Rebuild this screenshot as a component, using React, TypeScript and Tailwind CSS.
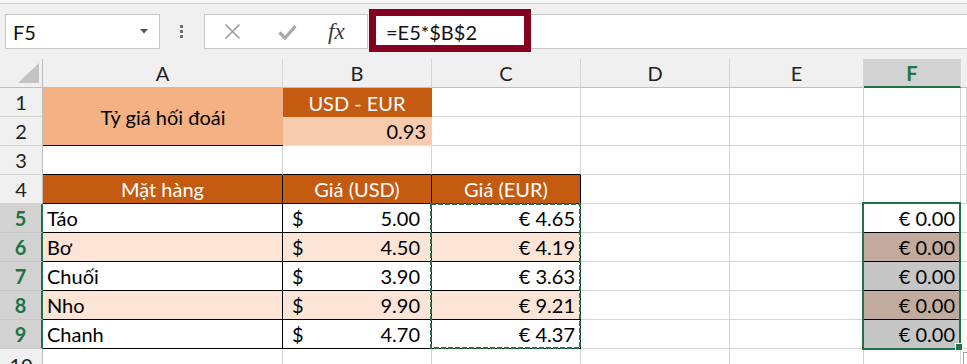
import React from "react";

const rows = [
  { n: 5, name: "Táo", usd: "5.00", eur: "€ 4.65", alt: false },
  { n: 6, name: "Bơ", usd: "4.50", eur: "€ 4.19", alt: true },
  { n: 7, name: "Chuối", usd: "3.90", eur: "€ 3.63", alt: false },
  { n: 8, name: "Nho", usd: "9.90", eur: "€ 9.21", alt: true },
  { n: 9, name: "Chanh", usd: "4.70", eur: "€ 4.37", alt: false },
];

function RowHead({ n, sel }: { n: number; sel?: boolean }) {
  return sel ? (
    <div className="flex items-center justify-center bg-[#d2d2d2] border-b border-r-2 border-b-[#c6c6c6] border-r-[#217346] text-[#217346] font-bold">
      {n}
    </div>
  ) : (
    <div className="flex items-center justify-center bg-[#f0f0f0] border-b border-r border-b-[#d4d4d4] border-r-[#bfbfbf] text-[#222]">
      {n}
    </div>
  );
}

function Blank() {
  return <div className="border-r border-b border-[#d4d4d4] bg-white" />;
}

export default function App() {
  return (
    <div className="relative w-[967px] h-[364px] overflow-hidden bg-white text-[20px] leading-[24px] text-black font-['Lato',sans-serif]">
      {/* top strip */}
      <div className="h-[4px] bg-[#f7f7f7] border-b border-[#d0d0d0]" />
      {/* toolbar */}
      <div className="h-[55px] bg-[#f0f0f0] flex items-start pt-[10px]">
        <div className="ml-[5px] w-[155px] h-[35px] bg-white border border-[#c6c6c6] flex items-center justify-between pl-[7px] pr-[11px]">
          <span className="text-[#111]">F5</span>
          <svg width="8" height="5" viewBox="0 0 8 5">
            <path d="M0 0 L8 0 L4 4.5 Z" fill="#555" />
          </svg>
        </div>
        <div className="ml-[20px] mt-[11px] flex flex-col gap-[2px]">
          <div className="w-[3px] h-[3px] bg-[#6e6e6e]" />
          <div className="w-[3px] h-[3px] bg-[#6e6e6e]" />
          <div className="w-[3px] h-[3px] bg-[#6e6e6e]" />
        </div>
        <div className="ml-[21px] w-[164px] h-[35px] bg-white border border-[#c6c6c6] flex items-center">
          <svg className="ml-[19px]" width="17" height="17" viewBox="0 0 17 17">
            <path d="M1.5 1.5 L15.5 15.5 M15.5 1.5 L1.5 15.5" stroke="#9a9a9a" strokeWidth="1.6" />
          </svg>
          <svg className="ml-[37px]" width="19" height="16" viewBox="0 0 19 16">
            <path d="M1.5 8.5 L7 14 L17.5 2" stroke="#a8a8a8" strokeWidth="3.2" fill="none" strokeLinejoin="miter" />
          </svg>
          <span className="ml-[31px] text-[23px] italic text-[#3a3a3a] font-['Liberation_Serif',serif] leading-none">
            fx
          </span>
        </div>
        <div className="ml-[1px] flex-1 h-[35px] bg-white border-y border-[#c6c6c6] flex items-center pl-[17px]">
          <span className="text-[20px] text-[#111]">=E5*$B$2</span>
        </div>
      </div>

      {/* grid */}
      <div className="grid grid-cols-[43px_240px_149px_149px_149px_134px_97px_1fr] grid-rows-[29px_29px_29px_29px_29px_29px_29px_29px_29px_29px_29px]">
        {/* column headers */}
        <div className="relative bg-[#f0f0f0] border-r border-b border-r-[#bfbfbf] border-b-[#bfbfbf]">
          <svg className="absolute left-[18px] top-[4px]" width="22" height="21" viewBox="0 0 22 21">
            <path d="M21 0 L21 20 L0 20 Z" fill="#c4c4c4" />
          </svg>
        </div>
        <div className="flex items-center justify-center bg-[#f0f0f0] border-r border-b border-r-[#d4d4d4] border-b-[#bfbfbf] text-[#222]">A</div>
        <div className="flex items-center justify-center bg-[#f0f0f0] border-r border-b border-r-[#d4d4d4] border-b-[#bfbfbf] text-[#222]">B</div>
        <div className="flex items-center justify-center bg-[#f0f0f0] border-r border-b border-r-[#d4d4d4] border-b-[#bfbfbf] text-[#222]">C</div>
        <div className="flex items-center justify-center bg-[#f0f0f0] border-r border-b border-r-[#d4d4d4] border-b-[#bfbfbf] text-[#222]">D</div>
        <div className="flex items-center justify-center bg-[#f0f0f0] border-r border-b border-r-[#d4d4d4] border-b-[#bfbfbf] text-[#222]">E</div>
        <div className="flex items-center justify-center bg-[#d2d2d2] border-r border-b-2 border-r-[#d4d4d4] border-b-[#217346] text-[#217346] font-bold">F</div>
        <div className="bg-[#f0f0f0] border-b border-b-[#bfbfbf]" />

        {/* row 1 */}
        <RowHead n={1} />
        <div className="row-span-2 flex items-center justify-center bg-[#f4b183] border-b border-b-black">
          Tỷ giá hối đoái
        </div>
        <div className="flex items-center justify-center bg-[#c55a11] text-white border-r border-[#c55a11]">USD - EUR</div>
        <Blank />
        <Blank />
        <Blank />
        <Blank />
        <Blank />

        {/* row 2 */}
        <RowHead n={2} />
        <div className="flex items-center justify-end pr-[5px] bg-[#f8cbad] border-r border-b border-r-[#f8cbad] border-b-[#e6e6e6]">0.93</div>
        <Blank />
        <Blank />
        <Blank />
        <Blank />
        <Blank />

        {/* row 3 */}
        <RowHead n={3} />
        <div className="bg-white border-r border-b border-r-[#d4d4d4] border-b-black" />
        <div className="bg-white border-r border-b border-r-[#d4d4d4] border-b-black" />
        <div className="bg-white border-r border-b border-r-[#d4d4d4] border-b-black" />
        <Blank />
        <Blank />
        <Blank />
        <Blank />

        {/* row 4 */}
        <RowHead n={4} />
        <div className="flex items-center justify-center bg-[#c55a11] text-white border-r border-b border-black">Mặt hàng</div>
        <div className="flex items-center justify-center bg-[#c55a11] text-white border-r border-b border-black">Giá (USD)</div>
        <div className="flex items-center justify-center bg-[#c55a11] text-white border-r border-b border-black">Giá (EUR)</div>
        <Blank />
        <Blank />
        <Blank />
        <Blank />

        {rows.map((r, i) => (
          <React.Fragment key={r.n}>
            <RowHead n={r.n} sel />
            <div className={(r.alt ? "bg-[#fce4d6] " : "bg-white ") + "flex items-center pl-[4px] border-r border-b border-black"}>
              {r.name}
            </div>
            <div className={(r.alt ? "bg-[#fce4d6] " : "bg-white ") + "flex items-center justify-between pl-[9px] pr-[11px] border-r border-b border-black"}>
              <span>$</span>
              <span>{r.usd}</span>
            </div>
            <div className={(r.alt ? "bg-[#fce4d6] " : "bg-white ") + "flex items-center justify-end pr-[5px] border-r border-b border-black"}>
              {r.eur}
            </div>
            <Blank />
            <Blank />
            <div
              className={
                (i === 0 ? "bg-white " : i % 2 === 1 ? "bg-[#c1ab9f] " : "bg-[#c6c6c6] ") +
                "flex items-center justify-end pr-[5px] border-r border-b border-r-[#d4d4d4] border-b-black"
              }
            >
              € 0.00
            </div>
            <div className="bg-white border-b border-[#d4d4d4]" />
          </React.Fragment>
        ))}

        {/* row 10 */}
        <div className="flex items-start justify-center pt-[4px] bg-[#f0f0f0] border-r border-r-[#bfbfbf] text-[#222]">10</div>
        <Blank />
        <Blank />
        <Blank />
        <Blank />
        <Blank />
        <Blank />
        <div className="bg-white" />
      </div>

      {/* copy marquee around C5:C9 */}
      <svg className="absolute left-[429px] top-[202px]" width="153" height="148" viewBox="0 0 153 148">
        <rect x="2" y="2" width="149" height="144" fill="none" stroke="#217346" strokeWidth="2" strokeDasharray="5 2" />
      </svg>

      {/* selection F5:F9 */}
      <div className="absolute left-[862px] top-[202px] w-[99px] h-[148px] border-2 border-[#217346]" />
      <div className="absolute left-[955px] top-[343px] w-[8px] h-[8px] bg-[#217346] border border-white" />
      <div className="absolute left-[963px] top-[352px] w-[12px] h-[14px] bg-white border border-[#a0a0a0]" />

      {/* formula annotation */}
      <div className="absolute left-[369px] top-[9px] w-[162px] h-[43px] border-[7px] border-[#86001f]" />
    </div>
  );
}
